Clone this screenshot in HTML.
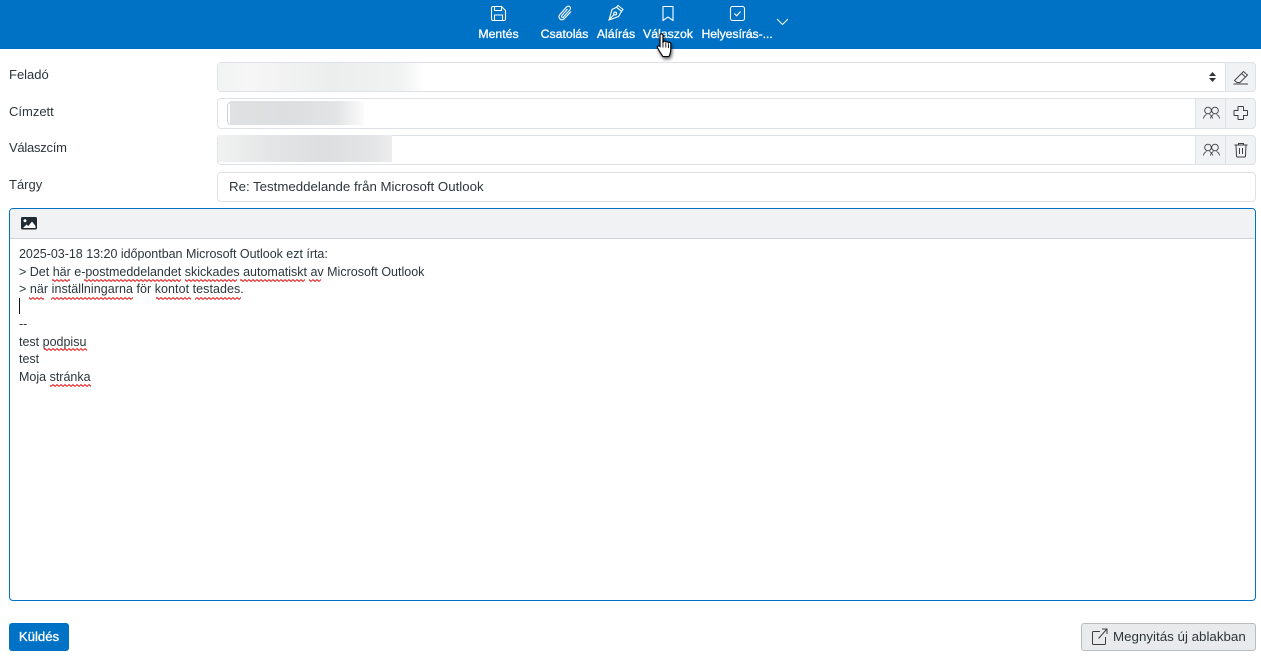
<!DOCTYPE html>
<html><head><meta charset="utf-8"><style>
html,body{margin:0;padding:0;background:#fff}
body{width:1261px;height:672px;position:relative;overflow:hidden;font-family:"Liberation Sans",sans-serif;font-size:13px;color:#2c363a}
.a{position:absolute}
.t{position:absolute;white-space:nowrap;line-height:18px}
.h{position:absolute;top:26px;color:#fff;font-size:12.3px;-webkit-text-stroke:.3px #fff;line-height:16px;white-space:nowrap;transform:translateX(-50%)}
.box{position:absolute;box-sizing:border-box;border:1px solid #dee2e6;border-radius:4px;background:#fff}
.add{position:absolute;box-sizing:border-box;background:#f1f2f4;border:1px solid #dee2e6}
svg{position:absolute;overflow:visible}
.l{left:9px;font-size:13px}
.b{position:absolute;left:19px;font-size:12.5px}
</style></head><body>
<div class="a" style="left:0;top:0;width:1261px;height:49px;background:#0072c6"></div>

<svg style="left:490px;top:5px" width="17" height="17" fill="none" stroke="#fff" stroke-width="1.1"><path d="M1.5 3a1.5 1.5 0 0 1 1.5-1.5h8.5l4 4V14a1.5 1.5 0 0 1-1.5 1.5H3A1.5 1.5 0 0 1 1.5 14z"/><path d="M4.5 1.5v4h7v-4M4.5 15.5V10h8v5.5"/></svg>
<svg style="left:557px;top:5px" width="17" height="17" fill="none" stroke="#fff" stroke-width="1.1"><path d="M14 6.5 7.500 13.500a3 3 0 0 1-5-3.500l7-8a2.200 2.200 0 0 1 3.500 2.700l-6.500 7.300a1 1 0 0 1-1.800-1.300L10.500 4"/></svg>
<svg style="left:607px;top:4px" width="18" height="18" fill="none" stroke="#fff" stroke-width="1.1"><path d="M11 1.500l5 4-1.500 1.800-5-4zM9.500 3.300 5 5.500 2 16l9.500-3.500 3-5.200M2 16l5-5.500"/><circle cx="8.200" cy="9.500" r="1.400"/></svg>
<svg style="left:660px;top:5px" width="16" height="17" fill="none" stroke="#fff" stroke-width="1.1"><path d="M3 1.500h10v14l-5-3.500-5 3.500z"/></svg>
<svg style="left:729px;top:5px" width="17" height="17" fill="none" stroke="#fff" stroke-width="1.1"><rect x="1.500" y="1.500" width="14" height="14" rx="2"/><path d="M5.300 8.500l2.300 2.300 4-4.300"/></svg>
<svg style="left:776px;top:18px" width="13" height="8" fill="none" stroke="#fff" stroke-width="1"><path d="M1 1l5.500 5.500L12 1"/></svg>

<div class="h" style="left:498.500px">Mentés</div>
<div class="h" style="left:564.500px">Csatolás</div>
<div class="h" style="left:616px">Aláírás</div>
<div class="h" style="left:668px">Válaszok</div>
<div class="h" style="left:737px;letter-spacing:-.1px">Helyesírás-...</div>

<svg style="left:656px;top:33px;filter:drop-shadow(1px 2px 1.5px rgba(0,0,0,.6))" width="20" height="24" viewBox="0 0 20 24"><g transform="scale(1.12)"><path d="M3.600 1.900c0-1.600 2.600-1.600 2.600 0v7l.3-1c.6-1 2.200-.7 2.300.5.4-1 2.100-.8 2.300.4.500-.8 2-.5 2.100.7v5c0 3-1.200 6-1.800 6.500H6.200c-.7-1-3.600-5.500-4.700-7.500-.8-1.500.8-2.700 2.100-1.500z" fill="#fff" stroke="#000" stroke-width="1"/><path d="M6.200 9v4M8.800 9v4M11.200 10v3.500" stroke="#000" stroke-width=".8"/></g></svg>

<div class="t l" style="top:66px">Feladó</div>
<div class="t l" style="top:103px">Címzett</div>
<div class="t l" style="top:139px;letter-spacing:-.25px">Válaszcím</div>
<div class="t l" style="top:176px">Tárgy</div>

<div class="box" style="left:217px;top:62px;width:1010px;height:30px;border-radius:4px 0 0 4px"></div>
<div class="add" style="left:1225px;top:62px;width:31px;height:30px;border-radius:0 4px 4px 0"></div>
<div class="box" style="left:217px;top:98px;width:980px;height:31px;border-radius:4px 0 0 4px"></div>
<div class="add" style="left:1195px;top:98px;width:31px;height:31px"></div>
<div class="add" style="left:1225px;top:98px;width:31px;height:31px;border-radius:0 4px 4px 0"></div>
<div class="box" style="left:217px;top:135px;width:980px;height:30px;border-radius:4px 0 0 4px"></div>
<div class="add" style="left:1195px;top:135px;width:31px;height:30px"></div>
<div class="add" style="left:1225px;top:135px;width:31px;height:30px;border-radius:0 4px 4px 0"></div>
<div class="box" style="left:217px;top:172px;width:1039px;height:30px"></div>

<div class="a" style="left:218px;top:63px;width:207px;height:28px;overflow:hidden;background:linear-gradient(90deg,#f2f3f3,#f6f6f6 15%,#eceded 55%,#f1f2f2 88%,#fff)"></div>
<div class="a" style="left:227px;top:102px;width:6px;height:23px;border:1px solid #ced4da;border-right:0;border-radius:4px 0 0 4px;box-sizing:border-box"></div>
<div class="a" style="left:230px;top:101px;width:134px;height:24px;background:linear-gradient(90deg,#dfe1e2,#dcdedf 45%,#e3e4e5 80%,#fbfbfb)"></div>
<div class="a" style="left:218px;top:135px;width:174px;height:27px;background:linear-gradient(90deg,#f1f2f2,#e3e5e6 30%,#dcdedf 60%,#e4e5e6 90%,#ededee)"></div>

<svg style="left:1208px;top:71px" width="9" height="12" fill="#2c363a"><path d="M4.500 1 8 5H1zM4.500 11 1 7h7z"/></svg>
<svg style="left:1233px;top:69px" width="16" height="16" fill="none" stroke="#3a3f42" stroke-width=".9"><path d="M1.500 11.500 10.500 2.500l4 3.500-7.500 7.500H4zM8.500 4.500l4 3.500M.5 15h14.500"/></svg>
<svg style="left:1203px;top:106px" width="17" height="14" fill="none" stroke="#3a3f42" stroke-width=".9"><circle cx="5" cy="4.500" r="3.300"/><circle cx="12" cy="4.500" r="3.300"/><path d="M.5 12.500c.3-2.500 1.800-3.500 3-4M9.500 12.500c-.3-2.500-1.800-3.500-3-4M7.500 12.500c.3-2.500 1.800-3.500 3-4M16.500 12.500c-.3-2.500-1.800-3.500-3-4"/></svg>
<svg style="left:1233px;top:105px" width="16" height="16" fill="none" stroke="#3a3f42" stroke-width="1"><path d="M5.500 1.500h4.500a.5.5 0 0 1 .5.500v3.500H14a.5.5 0 0 1 .5.500v4a.5.5 0 0 1-.5.500h-3.500V14a.5.5 0 0 1-.5.500H5.500A.5.5 0 0 1 5 14v-3.500H1.500A.5.5 0 0 1 1 10V6a.5.5 0 0 1 .5-.5H5V2a.5.5 0 0 1 .5-.5z"/></svg>
<svg style="left:1203px;top:143px" width="17" height="14" fill="none" stroke="#3a3f42" stroke-width=".9"><circle cx="5" cy="4.500" r="3.300"/><circle cx="12" cy="4.500" r="3.300"/><path d="M.5 12.500c.3-2.500 1.800-3.500 3-4M9.500 12.500c-.3-2.500-1.800-3.500-3-4M7.500 12.500c.3-2.500 1.800-3.500 3-4M16.500 12.500c-.3-2.500-1.800-3.500-3-4"/></svg>
<svg style="left:1234px;top:142px" width="14" height="16" fill="none" stroke="#3a3f42" stroke-width="1"><path d="M.5 3h13M4.500 3V1.500h5V3M2 3l.5 11a1 1 0 0 0 1 1h7a1 1 0 0 0 1-1L12 3M5.500 6v6M8.500 6v6"/></svg>

<div class="t" style="left:229px;top:178px;font-size:13.250px;color:#2c363a">Re: Testmeddelande från Microsoft Outlook</div>

<div class="a" style="left:9px;top:208px;width:1247px;height:393px;box-sizing:border-box;border:1px solid #0072c6;border-radius:4px"></div>
<div class="a" style="left:10px;top:209px;width:1245px;height:29px;background:#f1f2f4;border-bottom:1px solid #ced4da;border-radius:3px 3px 0 0;box-sizing:content-box"></div>
<svg style="left:21px;top:217px" width="16" height="13"><rect width="16" height="12.500" rx="1.500" fill="#1f2a33"/><circle cx="4" cy="3.700" r="1.500" fill="#fff"/><path d="M2 11l3.500-3.500 1.800 1.500 3.700-4.500 3.500 4.500V11z" fill="#fff"/></svg>

<div class="t b" style="top:245px;letter-spacing:-.02px">2025-03-18 13:20 időpontban Microsoft Outlook ezt írta:</div>
<div class="t b" style="top:263px">&gt; Det här e-postmeddelandet skickades automatiskt av Microsoft Outlook</div>
<div class="t b" style="top:280px;letter-spacing:.05px">&gt; när inställningarna för kontot testades.</div>
<div class="a" style="left:19px;top:298px;width:1px;height:16px;background:#111"></div>
<div class="t b" style="top:315px">--</div>
<div class="t b" style="top:333px">test podpisu</div>
<div class="t b" style="top:350px">test</div>
<div class="t b" style="top:368px">Moja stránka</div>

<svg style="left:0;top:0" width="1261" height="672"><defs><pattern id="w" width="4" height="3" patternUnits="userSpaceOnUse"><path d="M0 1.500 1 .7 3 2.300 4 1.500" fill="none" stroke="#e0181a" stroke-width="1.100"/></pattern></defs>
<g fill="url(#w)"><rect x="52" y="279" width="18" height="3"/><rect x="84" y="279" width="97" height="3"/><rect x="185" y="279" width="52" height="3"/><rect x="240" y="279" width="65" height="3"/><rect x="309" y="279" width="12" height="3"/><rect x="29" y="297" width="15" height="3"/><rect x="51" y="297" width="82" height="3"/><rect x="156" y="297" width="35" height="3"/><rect x="195" y="297" width="46" height="3"/><rect x="44" y="348" width="43" height="3"/><rect x="50" y="384" width="41" height="3"/></g></svg>

<div class="a" style="left:9px;top:623px;width:60px;height:28px;background:#0072c6;border-radius:3px;color:#fff;font-size:13.200px;-webkit-text-stroke:.3px #fff;text-align:center;line-height:27px">Küldés</div>
<div class="a" style="left:1081px;top:623px;width:175px;height:28px;box-sizing:border-box;background:#e9eaeb;border:1px solid #b9bcbe;border-radius:3px"></div>
<svg style="left:1091px;top:628px" width="18" height="18" fill="none" stroke="#3a3f42" stroke-width="1"><path d="M9 3.500H2.500a1 1 0 0 0-1 1v11a1 1 0 0 0 1 1h11a1 1 0 0 0 1-1V9M7.500 10.500 15.500 1.500M11 1h5v5"/></svg>
<div class="t" style="left:1113px;top:628px;font-size:13.350px">Megnyitás új ablakban</div>
</body></html>
